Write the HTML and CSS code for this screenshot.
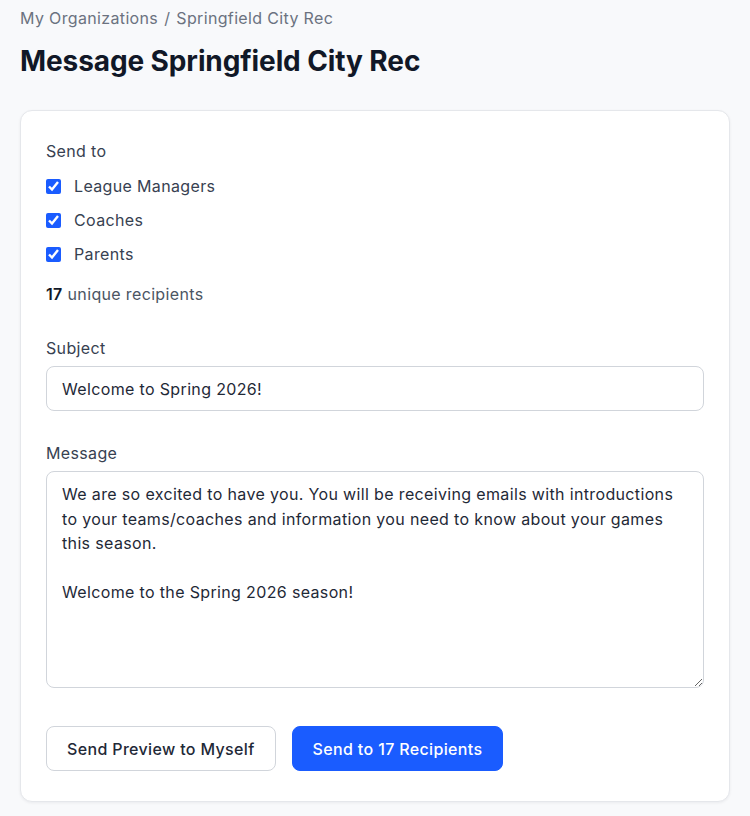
FILE: index.html
```html
<!DOCTYPE html>
<html lang="en">
<head>
<meta charset="utf-8">
<title>Message Springfield City Rec</title>
<link rel="stylesheet" href="styles.css">
</head>
<body>
<div class="page">
  <nav class="breadcrumb">
    <a href="#" class="crumb">My Organizations</a>
    <span class="sep">/</span>
    <a href="#" class="crumb">Springfield City Rec</a>
  </nav>
  <h1 class="title">Message Springfield City Rec</h1>

  <form class="card">
    <div class="label">Send to</div>
    <div class="checks">
      <label class="check"><input type="checkbox" checked><span>League Managers</span></label>
      <label class="check"><input type="checkbox" checked><span>Coaches</span></label>
      <label class="check"><input type="checkbox" checked><span>Parents</span></label>
    </div>
    <div class="count"><strong>17</strong> unique recipients</div>

    <label class="label section" for="subject">Subject</label>
    <input id="subject" class="field input" type="text" value="Welcome to Spring 2026!">

    <label class="label section" for="message">Message</label>
    <textarea id="message" class="field textarea">We are so excited to have you. You will be receiving emails with introductions to your teams/coaches and information you need to know about your games this season.

Welcome to the Spring 2026 season!</textarea>

    <div class="actions">
      <button type="button" class="btn btn-secondary">Send Preview to Myself</button>
      <button type="button" class="btn btn-primary">Send to 17 Recipients</button>
    </div>
  </form>
</div>
</body>
</html>
```

FILE: styles.css
```css
* { box-sizing: border-box; }

html, body {
  margin: 0;
  background: #f8f9fb;
}

body {
  font-family: Inter, "Noto Sans", "Liberation Sans", sans-serif;
  color: #1f2937;
  font-size: 16px;
  letter-spacing: 0.35px;
}

.page {
  padding: 6px 20px 14px;
}

.breadcrumb {
  font-size: 16px;
  line-height: 24px;
  color: #6b7280;
  display: flex;
  gap: 6px;
}

.crumb {
  color: #6b7280;
  text-decoration: none;
}

.title {
  margin: 13px 0 0;
  font-size: 28px;
  line-height: 36px;
  font-weight: 700;
  color: #111827;
  letter-spacing: -0.1px;
}

.card {
  margin-top: 31px;
  background: #fff;
  border: 1px solid #e5e7eb;
  border-radius: 12px;
  box-shadow: 0 1px 3px rgba(17, 24, 39, 0.06);
  padding: 28px 25px 30px;
  display: flex;
  flex-direction: column;
}

.label {
  display: block;
  font-size: 16px;
  line-height: 24px;
  color: #374151;
  font-weight: 400;
}

.label.section {
  margin-top: 30px;
}

.checks {
  margin-top: 11px;
  display: flex;
  flex-direction: column;
  gap: 10px;
}

.check {
  display: flex;
  align-items: center;
  gap: 13px;
  line-height: 24px;
  color: #374151;
}

.check input {
  margin: 0;
  width: 15px;
  height: 15px;
  accent-color: #1a5cff;
}

.count {
  margin-top: 16px;
  line-height: 24px;
  color: #4b5563;
}

.count strong {
  color: #111827;
  font-weight: 600;
}

.field {
  margin-top: 6px;
  width: 100%;
  font-family: inherit;
  font-size: 16px;
  letter-spacing: 0.35px;
  color: #1f2937;
  background: #fff;
  border: 1px solid #d1d5db;
  border-radius: 8px;
  outline: none;
}

.input {
  height: 45px;
  padding: 0 15px;
}

.textarea {
  height: 217px;
  padding: 10px 15px;
  line-height: 24.5px;
  resize: vertical;
  display: block;
}

.actions {
  margin-top: 38px;
  display: flex;
  gap: 16px;
}

.btn {
  height: 45px;
  padding: 0 20px;
  font-family: inherit;
  font-size: 16px;
  letter-spacing: 0.35px;
  font-weight: 500;
  border-radius: 8px;
  cursor: pointer;
}

.btn-secondary {
  background: #fff;
  color: #1f2937;
  border: 1px solid #d1d5db;
}

.btn-primary {
  background: #1a5cff;
  color: #fff;
  border: 1px solid #1a5cff;
}
```
